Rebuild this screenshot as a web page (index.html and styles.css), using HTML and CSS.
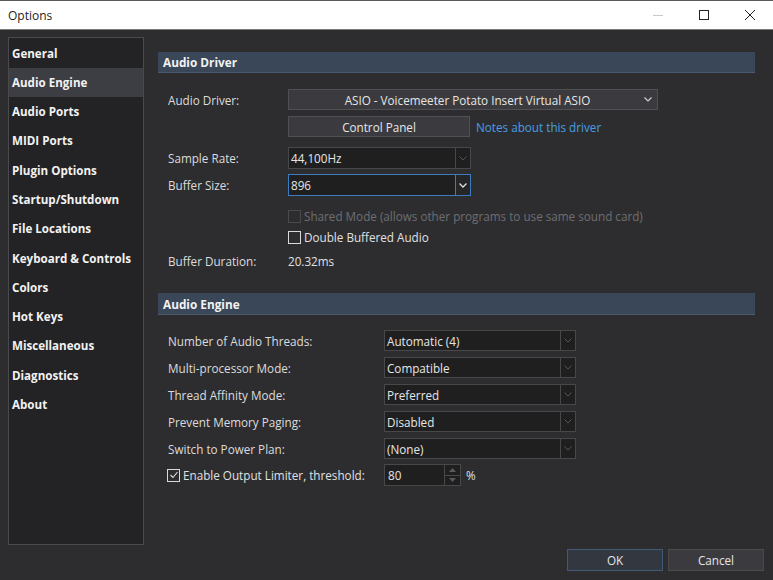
FILE: index.html
```html
<!DOCTYPE html>
<html>
<head>
<meta charset="utf-8">
<title>Options</title>
<link rel="stylesheet" href="styles.css">
</head>
<body>
<div class="window">
  <div class="titlebar">
    <span class="title">Options</span>
    <div class="controls">
      <span class="ctl"><svg width="12" height="12" viewBox="0 0 12 12"><line x1="1" y1="6.5" x2="11" y2="6.5" stroke="#c8c8c8" stroke-width="1"/></svg></span>
      <span class="ctl"><svg width="12" height="12" viewBox="0 0 12 12"><rect x="1.5" y="1.5" width="9" height="9" fill="none" stroke="#222" stroke-width="1"/></svg></span>
      <span class="ctl"><svg width="12" height="12" viewBox="0 0 12 12"><path d="M1 1 L11 11 M11 1 L1 11" stroke="#222" stroke-width="1"/></svg></span>
    </div>
  </div>

  <div class="content">
    <nav class="sidebar">
      <div class="item">General</div>
      <div class="item active">Audio Engine</div>
      <div class="item">Audio Ports</div>
      <div class="item">MIDI Ports</div>
      <div class="item">Plugin Options</div>
      <div class="item">Startup/Shutdown</div>
      <div class="item">File Locations</div>
      <div class="item">Keyboard &amp; Controls</div>
      <div class="item">Colors</div>
      <div class="item">Hot Keys</div>
      <div class="item">Miscellaneous</div>
      <div class="item">Diagnostics</div>
      <div class="item">About</div>
    </nav>

    <main class="panel">
      <div class="section-head">Audio Driver</div>
      <div class="rows">
        <div class="row r-driver">
          <span class="label">Audio Driver:</span>
          <div class="dropbtn">
            <span class="dropbtn-text">ASIO - Voicemeeter Potato Insert Virtual ASIO</span>
            <svg class="chev" width="8" height="5" viewBox="0 0 8 5"><polyline points="0.5,0.5 4,4 7.5,0.5" fill="none" stroke="#d0d0d0" stroke-width="1.2"/></svg>
          </div>
        </div>
        <div class="row r-cp">
          <span class="label"></span>
          <div class="button cp">Control Panel</div>
          <span class="link">Notes about this driver</span>
        </div>
        <div class="row r-rate">
          <span class="label">Sample Rate:</span>
          <div class="combo w183">
            <span class="combo-text">44,100Hz</span>
            <span class="combo-arrow"><svg width="8" height="5" viewBox="0 0 8 5"><polyline points="0.5,0.5 4,4 7.5,0.5" fill="none" stroke="#555" stroke-width="1"/></svg></span>
          </div>
        </div>
        <div class="row r-buf">
          <span class="label">Buffer Size:</span>
          <div class="combo w183 focused">
            <span class="combo-text">896</span>
            <span class="combo-arrow"><svg width="8" height="5" viewBox="0 0 8 5"><polyline points="0.5,0.5 4,4 7.5,0.5" fill="none" stroke="#e0e0e0" stroke-width="1.3"/></svg></span>
          </div>
        </div>
        <div class="row r-check1">
          <span class="label"></span>
          <span class="checkbox disabled"></span>
          <span class="check-text disabled-text">Shared Mode (allows other programs to use same sound card)</span>
        </div>
        <div class="row r-check2">
          <span class="label"></span>
          <span class="checkbox"></span>
          <span class="check-text">Double Buffered Audio</span>
        </div>
        <div class="row r-dur">
          <span class="label">Buffer Duration:</span>
          <span class="value">20.32ms</span>
        </div>
      </div>

      <div class="section-head engine-head">Audio Engine</div>
      <div class="rows">
        <div class="row erow first">
          <span class="label wide">Number of Audio Threads:</span>
          <div class="combo w192">
            <span class="combo-text">Automatic (4)</span>
            <span class="combo-arrow"><svg width="8" height="5" viewBox="0 0 8 5"><polyline points="0.5,0.5 4,4 7.5,0.5" fill="none" stroke="#555" stroke-width="1"/></svg></span>
          </div>
        </div>
        <div class="row erow">
          <span class="label wide">Multi-processor Mode:</span>
          <div class="combo w192">
            <span class="combo-text">Compatible</span>
            <span class="combo-arrow"><svg width="8" height="5" viewBox="0 0 8 5"><polyline points="0.5,0.5 4,4 7.5,0.5" fill="none" stroke="#555" stroke-width="1"/></svg></span>
          </div>
        </div>
        <div class="row erow">
          <span class="label wide">Thread Affinity Mode:</span>
          <div class="combo w192">
            <span class="combo-text">Preferred</span>
            <span class="combo-arrow"><svg width="8" height="5" viewBox="0 0 8 5"><polyline points="0.5,0.5 4,4 7.5,0.5" fill="none" stroke="#555" stroke-width="1"/></svg></span>
          </div>
        </div>
        <div class="row erow">
          <span class="label wide">Prevent Memory Paging:</span>
          <div class="combo w192">
            <span class="combo-text">Disabled</span>
            <span class="combo-arrow"><svg width="8" height="5" viewBox="0 0 8 5"><polyline points="0.5,0.5 4,4 7.5,0.5" fill="none" stroke="#555" stroke-width="1"/></svg></span>
          </div>
        </div>
        <div class="row erow">
          <span class="label wide">Switch to Power Plan:</span>
          <div class="combo w192">
            <span class="combo-text">(None)</span>
            <span class="combo-arrow"><svg width="8" height="5" viewBox="0 0 8 5"><polyline points="0.5,0.5 4,4 7.5,0.5" fill="none" stroke="#555" stroke-width="1"/></svg></span>
          </div>
        </div>
        <div class="row limiter">
          <span class="label wide limit-label">
            <span class="checkbox checked"><svg width="10" height="10" viewBox="0 0 10 10"><polyline points="1.5,5 4,7.5 8.5,2" fill="none" stroke="#e0e0e0" stroke-width="1.1"/></svg></span>
            <span class="check-text">Enable Output Limiter, threshold:</span>
          </span>
          <div class="spin">
            <span class="spin-text">80</span>
            <span class="spin-btns">
              <span class="spin-btn"><svg width="7" height="4" viewBox="0 0 7 4"><polygon points="0,4 3.5,0 7,4" fill="#5a5a5a"/></svg></span>
              <span class="spin-btn"><svg width="7" height="4" viewBox="0 0 7 4"><polygon points="0,0 7,0 3.5,4" fill="#5a5a5a"/></svg></span>
            </span>
          </div>
          <span class="pct">%</span>
        </div>
      </div>
    </main>
  </div>

  <div class="footer">
    <div class="button ok">OK</div>
    <div class="button cancel">Cancel</div>
  </div>
</div>
</body>
</html>
```

FILE: styles.css
```css
* { box-sizing: border-box; }

html, body {
  margin: 0;
  padding: 0;
  width: 773px;
  height: 580px;
  overflow: hidden;
  background: #2d2d30;
  font-family: "Open Sans", "Noto Sans", sans-serif;
  font-size: 11.7px;
  color: #dcdcdc;
}

.window {
  width: 773px;
  height: 580px;
  display: flex;
  flex-direction: column;
  background: #2d2d30;
}

/* Title bar */
.titlebar {
  height: 30px;
  flex: none;
  background: #ffffff;
  border-top: 1px solid #5a5a5a;
  border-bottom: 1px solid #7a7a7a;
  display: flex;
  align-items: center;
  padding-left: 8px;
}
.title {
  color: #1e1e1e;
  font-size: 12px;
  flex: 1;
}
.controls {
  display: flex;
  height: 100%;
}
.ctl {
  width: 46px;
  display: flex;
  align-items: center;
  justify-content: center;
}

/* Content */
.content {
  flex: 1;
  display: flex;
  padding: 7px 0 0 8px;
  min-height: 0;
}

.sidebar {
  width: 136px;
  height: 508px;
  flex: none;
  background: #232325;
  border: 1px solid #4a4a4c;
  display: flex;
  flex-direction: column;
}
.item {
  height: 29.3px;
  line-height: 29px;
  padding-left: 3px;
  font-weight: 700;
  font-size: 11.6px;
  color: #f2f2f2;
  white-space: nowrap;
}
.item:first-child { margin-top: 0.5px; }
.active {
  background: #3d3d44;
}

.panel {
  width: 597px;
  margin-left: 14px;
  flex: none;
  padding-top: 15px;
}

.section-head {
  height: 21px;
  background: #3a4759;
  border-bottom: 1px solid #4a5a70;
  padding-left: 5px;
  line-height: 21px;
  font-weight: 700;
  color: #f2f2f2;
  font-size: 11.8px;
}
.engine-head {
  margin-top: 24px;
  height: 22px;
  line-height: 22px;
}

.rows {
  padding-left: 10px;
  display: flex;
  flex-direction: column;
}

.row {
  display: flex;
  align-items: center;
}
.label {
  width: 120px;
  flex: none;
  color: #dcdcdc;
  white-space: nowrap;
}
.label.wide {
  width: 216px;
}

.r-driver { margin-top: 16px; height: 21px; }
.r-cp { margin-top: 6px; height: 21px; }
.r-rate { margin-top: 10px; height: 22px; }
.r-buf { margin-top: 5px; height: 22px; }
.r-check1 { margin-top: 12px; height: 16px; }
.r-check2 { margin-top: 5px; height: 16px; }
.r-dur { margin-top: 8px; height: 16px; }

.erow { margin-top: 6px; height: 21px; }
.erow.first { margin-top: 15px; }
.limiter { margin-top: 5px; height: 22px; }

/* Drop button */
.dropbtn {
  width: 370px;
  height: 21px;
  background: #3b3b3f;
  border: 1px solid #505054;
  display: flex;
  align-items: center;
  color: #e6e6e6;
}
.dropbtn-text {
  flex: 1;
  text-align: center;
  padding-left: 4px;
}
.chev {
  margin-right: 5px;
  margin-left: 2px;
}

.button {
  height: 21px;
  background: #3b3b3f;
  border: 1px solid #505054;
  display: flex;
  align-items: center;
  justify-content: center;
  color: #e6e6e6;
}
.cp { width: 182px; }

.link {
  margin-left: 6px;
  color: #4a9ee0;
}

/* Combo */
.combo {
  height: 22px;
  background: #1f1f20;
  border: 1px solid #48484b;
  display: flex;
  align-items: stretch;
}
.combo.w183 { width: 183px; }
.combo.w192 { width: 192px; height: 21px; }
.combo-text {
  flex: 1;
  padding-left: 2px;
  display: flex;
  align-items: center;
  color: #e6e6e6;
}
.combo-arrow {
  width: 15px;
  border-left: 1px solid #48484b;
  display: flex;
  align-items: center;
  justify-content: center;
}
.combo.focused {
  border-color: #3d7cc0;
}
.combo.focused .combo-arrow {
  border-left-color: #3d7cc0;
  background: #262628;
}

/* Checkboxes */
.checkbox {
  width: 13px;
  height: 13px;
  border: 1px solid #d8d8d8;
  flex: none;
  display: flex;
  align-items: center;
  justify-content: center;
}
.checkbox.disabled {
  border-color: #4a4a4c;
}
.check-text {
  margin-left: 3px;
  color: #e0e0e0;
  white-space: nowrap;
}
.disabled-text {
  color: #6e6e70;
}
.value { color: #e0e0e0; }

.label.wide.limit-label {
  display: flex;
  align-items: center;
  margin-left: -1px;
  width: 217px;
}

/* Spin */
.spin {
  width: 77px;
  height: 22px;
  background: #1f1f20;
  border: 1px solid #48484b;
  display: flex;
}
.spin-text {
  flex: 1;
  padding-left: 3px;
  display: flex;
  align-items: center;
  color: #e6e6e6;
}
.spin-btns {
  width: 16px;
  border-left: 1px solid #48484b;
  display: flex;
  flex-direction: column;
}
.spin-btn {
  flex: 1;
  display: flex;
  align-items: center;
  justify-content: center;
}
.spin-btn + .spin-btn {
  border-top: 1px solid #48484b;
}
.pct {
  margin-left: 5px;
  color: #e0e0e0;
}

/* Footer */
.footer {
  height: 34px;
  flex: none;
  display: flex;
  justify-content: flex-end;
  align-items: flex-start;
  padding: 3px 9px 0 0;
  gap: 5px;
}
.ok {
  width: 96px;
  height: 22px;
  background: #333840;
  border-color: #3d5a78;
}
.cancel {
  width: 96px;
  height: 22px;
  background: #3b3b3f;
  border-color: #4a4a4e;
}
```
